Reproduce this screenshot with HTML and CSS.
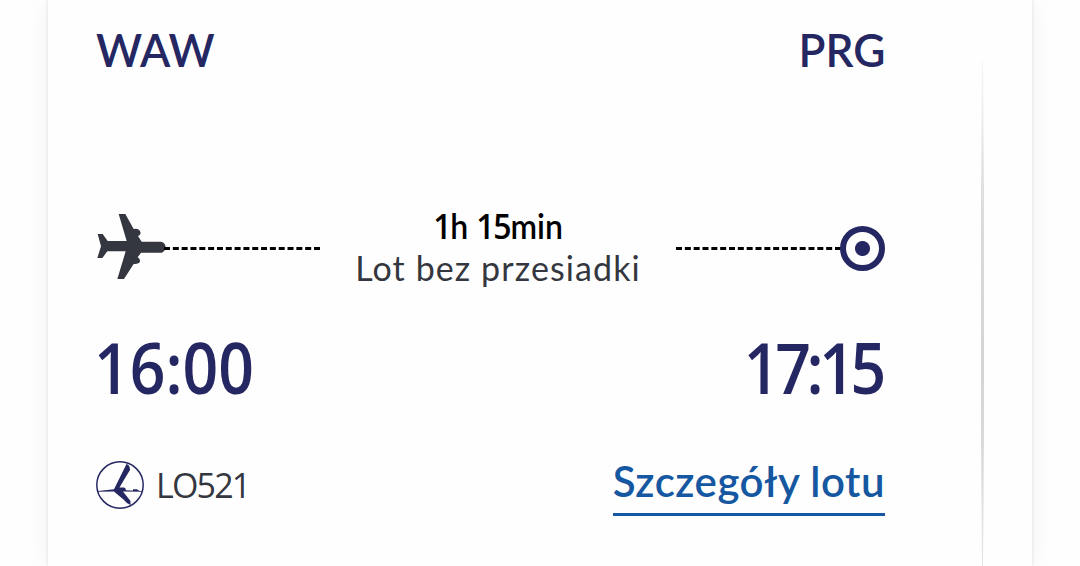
FILE: index.html
```html
<!DOCTYPE html>
<html lang="pl">
<head>
    <meta charset="UTF-8">
    <meta name="viewport" content="width=device-width, initial-scale=1.0">
    <title>WAW - PRG</title>
    <link rel="stylesheet" href="styles.css">
</head>
<body>
    <div class="card">
        <div class="flight">
            <div class="row airports">
                <span class="from">WAW</span>
                <span class="to">PRG</span>
            </div>
            <div class="row route">
                <svg class="plane" viewBox="51 42 207 198">
                    <path d="M116 42H136L161 87Q178 84 182 98Q181 107 174 108L185 125H243Q257 129 257 142Q256 153 246 158H183L173 172Q181 176 180 184Q178 193 161 192L132 237H112L137 154H82L67 174H52L63 139L53 102H68L83 123H140Z"/>
                </svg>
                <span class="line line-left"></span>
                <div class="info">
                    <span class="duration"><span class="num">1</span>h <span class="num">15</span>min</span>
                    <span class="stops">Lot bez przesiadki</span>
                </div>
                <span class="line line-right"></span>
                <span class="target"></span>
            </div>
            <div class="row times">
                <span class="departure">16:00</span>
                <span class="arrival">17:15</span>
            </div>
            <div class="row details">
                <div class="carrier">
                    <svg class="crane" viewBox="0 0 48 48">
                        <circle cx="24" cy="24" r="23.2"/>
                        <path d="M30.5 3Q34 4 34 9Q29 17 23.5 26.5H28Q30 27 30 29.3L46 30V30.7L27 30.5L34.5 40V44Q31 43 27.5 38.5Q22 34 18 30.5L2 30.8V30L18 28.2Z"/>
                        <path d="M37 28.3H41L43.5 30H37Z"/>
                    </svg>
                    <span class="number">LO521</span>
                </div>
                <a href="#" class="link">Szczegóły lotu</a>
            </div>
        </div>
        <div class="divider"></div>
    </div>
</body>
</html>
```
FILE: styles.css
```css
body {
    margin: 0;
    height: 566px;
    overflow: hidden;
    background-color: #fefefe;
    font-family: Lato, "Liberation Sans", sans-serif;
    color: #252763;
}
.card {
    display: flex;
    justify-content: space-between;
    box-sizing: border-box;
    width: 984px;
    height: 566px;
    margin: 0 auto;
    padding: 0 48px;
    background-color: #fefefe;
    box-shadow: 0 0 3px rgba(37, 39, 99, 0.15), 0 0 24px rgba(37, 39, 99, 0.05);
    clip-path: inset(0 -40px);
}
.flight {
    width: 789px;
}
.row {
    display: flex;
    justify-content: space-between;
    align-items: center;
    white-space: nowrap;
}
.airports {
    height: 60px;
    padding-top: 19px;
    font-size: 47px;
    font-weight: 600;
}
.from {
    transform: scaleX(0.94);
    transform-origin: left;
    letter-spacing: 0;
}
.to {
    transform: scaleX(0.94);
    transform-origin: right;
}
.route {
    height: 90px;
    margin-top: 124px;
}
.plane {
    width: 69px;
    height: 66px;
    margin: -2px 0 0 1px;
    fill: #34373f;
}
.line {
    border-top: 3px dashed #000;
}
.line-left {
    width: 156px;
    margin-left: -2px;
    margin-top: 1px;
}
.line-right {
    width: 165px;
    margin-top: 1px;
}
.info {
    display: flex;
    flex: 1;
    flex-direction: column;
    align-items: center;
    margin-top: -2px;
    font-size: 34px;
    line-height: 42px;
}
.duration {
    color: #000;
    font-weight: 600;
    transform: scaleX(0.94);
}
.num {
    font-family: "Open Sans", sans-serif;
    letter-spacing: -1.2px;
}
.stops {
    color: #34373f;
    letter-spacing: 1.1px;
}
.target {
    box-sizing: border-box;
    width: 45px;
    height: 45px;
    margin-left: -1px;
    border: 6px solid #252763;
    border-radius: 50%;
    background: radial-gradient(circle, #252763 7px, #fefefe 8px);
}
.times {
    height: 90px;
    margin-top: 28px;
    font-family: "Open Sans", sans-serif;
    font-size: 71px;
    font-weight: 600;
}
.departure {
    margin-left: -2px;
    transform: scaleX(0.88);
    transform-origin: left;
}
.arrival {
    margin-right: 3px;
    letter-spacing: -5px;
    transform: scaleX(0.88);
    transform-origin: right;
}
.details {
    height: 62px;
    margin-top: 43px;
}
.carrier {
    display: flex;
    align-items: center;
    gap: 12px;
    margin-bottom: 1px;
}
.crane {
    width: 48px;
    height: 48px;
    fill: #252763;
}
.crane circle {
    fill: none;
    stroke: #252763;
    stroke-width: 1.5;
}
.number {
    color: #34373f;
    font-family: "Open Sans", sans-serif;
    font-size: 34px;
    letter-spacing: -1.8px;
}
.link {
    box-sizing: border-box;
    height: 62px;
    border-bottom: 3px solid #1557a0;
    color: #1557a0;
    font-size: 42px;
    font-weight: 600;
    letter-spacing: 0.5px;
    line-height: 54px;
    text-decoration: none;
}
.divider {
    width: 3px;
    height: 504px;
    margin-top: 62px;
    background: linear-gradient(#f4f4f4, #dcdcde 30%, #d4d4d6 60%, #e4e4e6);
    clip-path: polygon(33% 0, 66% 0, 100% 25%, 100% 75%, 66% 100%, 33% 100%, 0 75%, 0 25%);
}
```
